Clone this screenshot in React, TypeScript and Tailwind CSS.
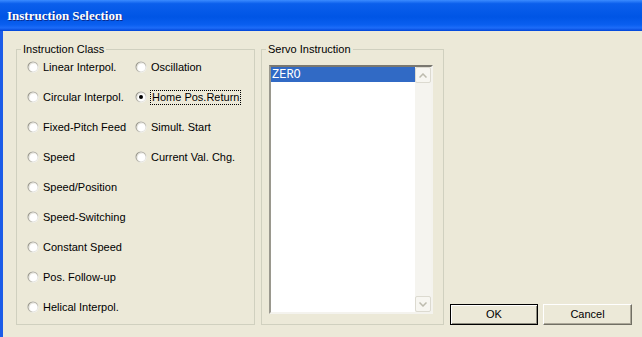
import React from "react";

const leftCol = [
  "Linear Interpol.",
  "Circular Interpol.",
  "Fixed-Pitch Feed",
  "Speed",
  "Speed/Position",
  "Speed-Switching",
  "Constant Speed",
  "Pos. Follow-up",
  "Helical Interpol.",
];
const rightCol = ["Oscillation", "Home Pos.Return", "Simult. Start", "Current Val. Chg."];

function RadioDot({ checked }: { checked?: boolean }) {
  return (
    <svg width="12" height="12" viewBox="0 0 12 12" className="shrink-0">
      <defs>
        <linearGradient id="rOuter" x1="0" y1="0" x2="1" y2="1">
          <stop offset="0" stopColor="#8e8c80" />
          <stop offset="0.5" stopColor="#b8b6aa" />
          <stop offset="1" stopColor="#ffffff" />
        </linearGradient>
        <linearGradient id="rInner" x1="0" y1="0" x2="1" y2="1">
          <stop offset="0" stopColor="#d4d2c6" />
          <stop offset="0.55" stopColor="#ffffff" />
        </linearGradient>
      </defs>
      <circle cx="6" cy="6" r="5.5" fill="#ffffff" />
      <circle cx="6" cy="6" r="5" fill="none" stroke="url(#rOuter)" strokeWidth="1.2" />
      <circle cx="6" cy="6" r="3.8" fill="none" stroke="url(#rInner)" strokeWidth="1" />
      {checked && <circle cx="6" cy="6" r="2" fill="#000000" />}
    </svg>
  );
}

function Radio({ label, checked }: { label: string; checked?: boolean }) {
  return (
    <div className="flex h-[14px] items-center gap-[4px]">
      <RadioDot checked={checked} />
      <span
        className={
          checked
            ? "px-[1px] leading-[13px] outline outline-1 outline-dotted outline-black"
            : "leading-[13px]"
        }
      >
        {label}
      </span>
    </div>
  );
}

function Chevron({ up }: { up?: boolean }) {
  return (
    <svg width="8" height="5" viewBox="0 0 8 5">
      <path
        d={up ? "M0.5 4.5 L4 1 L7.5 4.5" : "M0.5 0.5 L4 4 L7.5 0.5"}
        fill="none"
        stroke="#bdbbae"
        strokeWidth="1.5"
      />
    </svg>
  );
}

function ScrollButton({ up }: { up?: boolean }) {
  return (
    <div className="flex h-[16px] w-[16px] items-center justify-center rounded-[2px] border border-[#dcdad0] bg-[#f7f6f1]">
      <Chevron up={up} />
    </div>
  );
}

function Button({ children, isDefault }: { children: React.ReactNode; isDefault?: boolean }) {
  return (
    <div
      className={
        isDefault
          ? "flex h-[21px] w-[88px] items-center justify-center border border-black bg-[#ece9d8] shadow-[inset_1px_1px_0_#ffffff,inset_-1px_-1px_0_#8f8d80]"
          : "flex h-[21px] w-[89px] items-center justify-center border border-t-white border-l-white border-b-[#716f64] border-r-[#716f64] bg-[#ece9d8] shadow-[inset_-1px_-1px_0_#aca899]"
      }
    >
      {children}
    </div>
  );
}

export default function App() {
  return (
    <div
      className="flex h-[337px] w-[642px] flex-col bg-[#ece9d8] text-[11px] text-black"
      style={{ fontFamily: '"Liberation Sans", Arial, sans-serif' }}
    >
      <div className="flex h-[31px] shrink-0 items-center bg-[linear-gradient(to_bottom,#3b8bff_0%,#0b5fec_12%,#0055e5_55%,#0a5ff0_80%,#1d6cf8_90%,#0044d8_100%)] pl-[7px]">
        <span
          className="text-[13px] font-bold text-white [text-shadow:1px_1px_0_#0a2a8a]"
          style={{ fontFamily: '"Liberation Serif", "Times New Roman", serif' }}
        >
          Instruction Selection
        </span>
      </div>

      <div className="flex flex-1 items-start gap-[6px] border-l-[3px] border-[#1c5ce8] pl-[13px] pt-[12px]">
        <fieldset className="h-[282px] w-[239px] border border-[#d0d0bf] pl-[4px]">
          <legend className="px-[2px] leading-[13px]">Instruction Class</legend>
          <div className="ml-[6px] mt-[4px] flex">
            <div className="flex w-[108px] flex-col gap-[16px]">
              {leftCol.map((l) => (
                <Radio key={l} label={l} />
              ))}
            </div>
            <div className="flex flex-col gap-[16px]">
              {rightCol.map((l) => (
                <Radio key={l} label={l} checked={l === "Home Pos.Return"} />
              ))}
            </div>
          </div>
        </fieldset>

        <fieldset className="h-[282px] w-[183px] border border-[#d0d0bf] pl-[4px]">
          <legend className="px-[2px] leading-[13px]">Servo Instruction</legend>
          <div className="ml-[3px] mt-[9px] flex h-[249px] w-[164px] border-[2px] border-t-[#7a7870] border-l-[#9a988e] border-b-[#f4f3ee] border-r-[#f4f3ee] bg-white">
            <div className="flex-1">
              <div
                className="flex h-[15px] items-center bg-[#316ac5] pl-[1px] text-[12px] text-white"
                style={{ fontFamily: '"Liberation Mono", "Courier New", monospace' }}
              >
                ZERO
              </div>
            </div>
            <div className="flex w-[16px] flex-col justify-between bg-[#f5f4ef]">
              <ScrollButton up />
              <ScrollButton />
            </div>
          </div>
        </fieldset>

        <div className="mt-[261px] flex gap-[5px]">
          <Button isDefault>OK</Button>
          <Button>Cancel</Button>
        </div>
      </div>
    </div>
  );
}
